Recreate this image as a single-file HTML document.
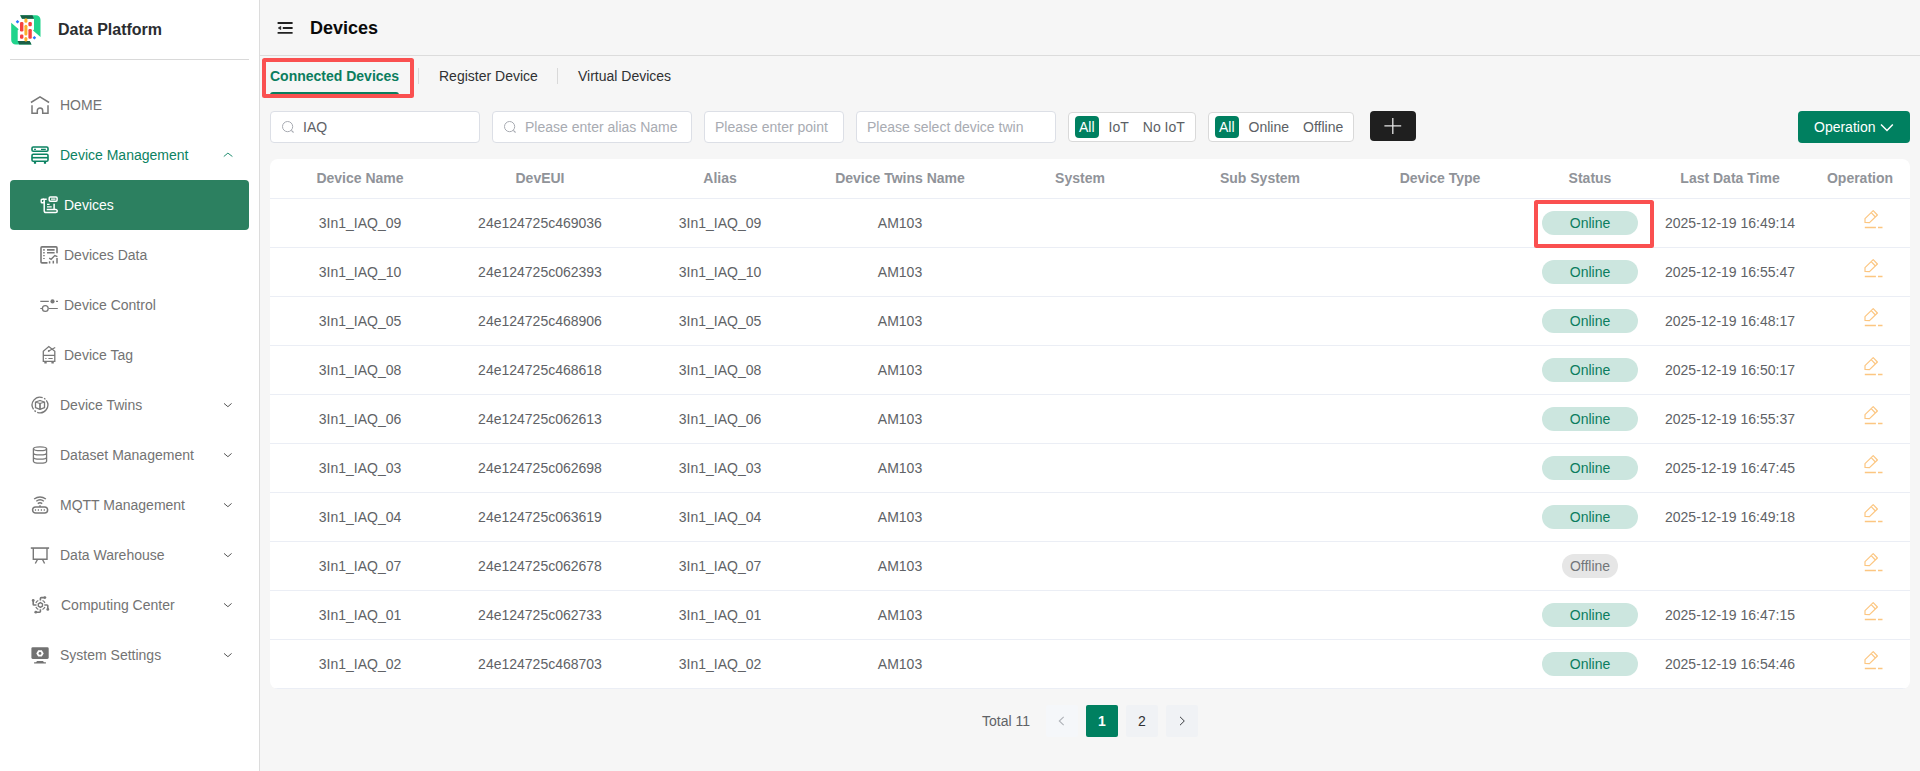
<!DOCTYPE html><html lang="en"><head><meta charset="utf-8"><title>Devices</title><style>*{box-sizing:border-box;margin:0;padding:0}
html,body{width:1920px;height:771px;overflow:hidden;background:#f6f6f6;font-family:"Liberation Sans",Arial,sans-serif;font-size:14px;color:#606266}
i{font-style:normal;display:block}
svg{display:block}
.side{position:absolute;left:0;top:0;width:260px;height:771px;background:#fff;border-right:1px solid #dcdcdc}
.logo{position:absolute;left:0;top:0;width:259px;height:59px}
.logo svg{position:absolute;left:6px;top:10px}
.brand{position:absolute;left:58px;top:20px;font-size:16px;line-height:20px;font-weight:700;color:#2b2d30;white-space:nowrap}
.sdiv{position:absolute;left:10px;top:59px;width:239px;height:1px;background:#d9d9d9}
.mi{position:absolute;left:10px;width:239px;height:50px;line-height:50px;color:#737373;white-space:nowrap}
.mi svg.ic{position:absolute;left:15px;top:10px}
.mi .mt{position:absolute;left:50px;top:0}
.mi.sub svg.ic,.mi.sub-active svg.ic{left:25px}
.mi.sub .mt,.mi.sub-active .mt{left:54px}
.mi.top-open{color:#0b8262}
.mi.sub-active{background:#2c8060;color:#fff;border-radius:4px}
.mi svg.arr{position:absolute;left:212px;top:20px}
.main{position:absolute;left:260px;top:0;width:1660px;height:771px}
.hd{position:absolute;left:0;top:0;width:1660px;height:56px;border-bottom:1px solid #dcdcdc}
.hd svg{position:absolute;left:10px;top:13px}
.hd h1{position:absolute;left:50px;top:16px;font-size:18px;line-height:24px;font-weight:700;color:#0a0a0a}
.tabs{position:absolute;left:-260px;top:0;width:1920px;height:0}
.tab{position:absolute;top:66px;line-height:20px;color:#303133;white-space:nowrap}
.tab.act{left:270px;font-weight:700;color:#0b7d5e}
.tab .bar{position:absolute;left:0;right:0;top:26px;height:3px;background:#0b7d5e;border-radius:3px 3px 0 0}
.tdiv{position:absolute;top:68px;width:1px;height:16px;background:#d9d9d9}
.redbox{position:absolute;border:4px solid #fa5050;border-radius:2.5px}
.filters{position:absolute;left:-260px;top:0;width:1920px;height:0}
.inp{position:absolute;top:111px;height:32px;background:#fff;border:1px solid #dcdfe6;border-radius:4px;line-height:30px;white-space:nowrap}
.inp svg{position:absolute;left:11px;top:8px}
.inp .val{position:absolute;left:32px;color:#606266}
.inp .ph{position:absolute;left:32px;color:#a8abb2}
.inp .ph:first-child{left:10px}
.seg{position:absolute;top:112px;height:30px;background:#fff;border:1px solid #d9d9d9;border-radius:4px;display:flex;align-items:center;padding:0 6px;gap:6px}
.sg{height:22px;line-height:22px;padding:0 4px;color:#5c5f65;white-space:nowrap;border-radius:4px}
.sg.on{background:#008060;color:#fff}
.plus{position:absolute;left:1370px;top:111px;width:46px;height:30px;background:#1f1f1f;border-radius:4px}
.plus svg{position:absolute;left:14px;top:6px}
.opbtn{position:absolute;left:1798px;top:111px;width:112px;height:32px;background:#008060;border-radius:4px;color:#fff;line-height:32px}
.opbtn span{position:absolute;left:16px;top:0}
.opbtn svg{position:absolute;left:82px;top:11px}
.tbl{position:absolute;left:10px;top:159px;width:1640px;height:530px;background:#fff;border-radius:8px;overflow:hidden}
.tr{display:flex;height:49px;border-bottom:1px solid #ebeef5}
.tr.th{height:40px;font-weight:700}
.c{flex:none;position:relative;display:flex;align-items:center;justify-content:center;white-space:nowrap;color:#606266}
.th .c{color:#909399;padding-bottom:2px}
.tag{display:inline-block;height:24px;line-height:24px;border-radius:12px;text-align:center}
.tag.on{width:96px;background:#cce6df;color:#0b7d5e}
.tag.off{width:56px;background:#e6e6e6;color:#73767a}
.c svg.ed{position:absolute;left:45px;top:6px}
.pg{position:absolute;left:-260px;top:0;width:1920px;height:0}
.tot{position:absolute;left:982px;top:711px;line-height:20px;color:#606266}
.pb{position:absolute;top:705px;width:32px;height:32px;line-height:32px;text-align:center;background:#f0f2f5;border-radius:2px;color:#303133}
.pb.cur{background:#008060;color:#fff;font-weight:700}
.pb.dis{background:#f5f7fa;color:#a8abb2}
.pb svg{position:absolute;left:10px;top:10px}
</style></head><body>
<aside class="side">
<div class="logo"><svg class="lg" width="40" height="40" viewBox="0 0 40 40" fill="none" >
<g id="lgh"><path d="M14.200 5.200H30a4.500 4.500 0 0 1 4.500 4.500V27L27 20.500l1-1V8.800H16z" fill="#20d48c"/>
<path d="M14.200 5.300h12.300L28 8.800H16z" fill="#1a5e46"/></g>
<g transform="rotate(180 19.850 19.850)"><path d="M14.200 5.200H30a4.500 4.500 0 0 1 4.500 4.500V27L27 20.500l1-1V8.800H16z" fill="#20d48c"/>
<path d="M14.200 5.300h12.300L28 8.800H16z" fill="#1a5e46"/></g>
<rect x="14" y="11.900" width="3.400" height="9.600" rx="1.250" fill="#f5423f"/><rect x="14" y="24.400" width="3.400" height="4.400" rx="1.250" fill="#f5423f"/>
<rect x="22.400" y="11.900" width="3.400" height="4.300" rx="1.250" fill="#f5423f"/><rect x="22.400" y="18.900" width="3.400" height="9.900" rx="1.250" fill="#f5423f"/>
<rect x="18.400" y="8.300" width="3" height="4.500" rx="1.500" fill="#fbb02c"/><rect x="18.400" y="14.800" width="3" height="10.600" rx="1.500" fill="#fbb02c"/><rect x="18.400" y="27" width="3" height="4.600" rx="1.500" fill="#fbb02c"/>
<rect x="10.200" y="10.500" width="2.600" height="2.600" rx=".4" transform="rotate(45 11.500 11.800)" fill="#2878ff"/><rect x="27.100" y="26.400" width="2.600" height="2.600" rx=".4" transform="rotate(45 28.400 27.700)" fill="#2878ff"/>
</svg><span class="brand">Data Platform</span></div><div class="sdiv"></div>
<div class="mi top" style="top:80px"><svg class="ic" width="30" height="30" viewBox="0 0 30 30" fill="none" ><path d="M5.900 12.500 15 6.900l9.100 5.600M7 15.200v8h5.300v-2.500a2.700 2.700 0 0 1 5.400 0v2.500H23v-8" stroke="#787878" stroke-width="1.500"/></svg><span class="mt">HOME</span></div>
<div class="mi top-open" style="top:130px"><svg class="ic" width="30" height="30" viewBox="0 0 30 30" fill="none" ><rect x="7" y="7" width="16" height="4.200" rx="1.300" stroke="#0b8262" stroke-width="1.600"/><rect x="7" y="14.200" width="16" height="7" rx="1.300" stroke="#0b8262" stroke-width="1.600"/><path d="M7 17.700h16" stroke="#0b8262" stroke-width="1.600"/><path d="M9.100 9.400h1.800M16 9.400h4.800" stroke="#0b8262" stroke-width="1.100"/><path d="M10 22v1.700M20 22v1.700" stroke="#0b8262" stroke-width="2.200"/></svg><span class="mt">Device Management</span><svg class="arr" width="12" height="8" viewBox="0 0 12 8" fill="none" ><path d="M1.800 6.500 5.900 3.100 10.400 6.500" stroke="#0b8262" stroke-width=".9"/></svg></div>
<div class="mi sub-active" style="top:180px"><svg class="ic" width="30" height="30" viewBox="0 0 30 30" fill="none" ><rect x="6.200" y="9.300" width="3" height="3.500" rx=".8" stroke="#fff" stroke-width="1.400"/><path d="M8 9.300h3.700M9.200 11v9.800a1.800 1.800 0 0 0 1.800 1.800h9.700a1.500 1.500 0 0 0 0-3.100h-9" stroke="#fff" stroke-width="1.500"/><rect x="14.200" y="6.900" width="7.900" height="4.300" rx="1.100" stroke="#fff" stroke-width="1.500"/><path d="M16 9.100h4.500M12 14.400h2.600M12 16.900h4.700" stroke="#fff" stroke-width="1.300"/><path d="M19.100 13.800V19" stroke="#fff" stroke-width="1.500"/></svg><span class="mt">Devices</span></div>
<div class="mi sub" style="top:230px"><svg class="ic" width="30" height="30" viewBox="0 0 30 30" fill="none" ><path d="M22 13.200V7.900a1 1 0 0 0-1-1H7a1 1 0 0 0-1 1v14A1 1 0 0 0 7 22.900h5.500" stroke="#787878" stroke-width="1.600"/><path d="M8.200 9.900h1.500M12 9.900h7.600M8.200 12.800h1.500M12 12.800h7.600" stroke="#787878" stroke-width="1.600"/><path d="M8.200 15.600h1.500M8.200 18.500h1.500" stroke="#787878" stroke-width="1.100"/><path d="M14.200 18.100l1.900 1.200 3.700-3.700 2.600 1.100" stroke="#787878" stroke-width="1.400"/><path d="M14.600 21.200v2.300M18.300 20.800v2.700M22 18v5.500" stroke="#787878" stroke-width="1.500"/></svg><span class="mt">Devices Data</span></div>
<div class="mi sub" style="top:280px"><svg class="ic" width="30" height="30" viewBox="0 0 30 30" fill="none" ><path d="M5.300 11.400h8.500M21 11.400h2M5.300 18.500H7M13.800 18.500h9" stroke="#787878" stroke-width="1.200"/><circle cx="17.500" cy="11.400" r="2.100" fill="#787878"/><circle cx="10.300" cy="18.500" r="2.900" stroke="#787878" stroke-width="1.300"/></svg><span class="mt">Device Control</span></div>
<div class="mi sub" style="top:330px"><svg class="ic" width="30" height="30" viewBox="0 0 30 30" fill="none" ><path d="M8.300 21.400V11.200l5.500-4.700 6 4.700v10.200zM8.300 15.400h11.500" stroke="#787878" stroke-width="1.300"/><path d="M13.700 11 20.200 7.400" stroke="#787878" stroke-width="1.200"/><circle cx="13.700" cy="11" r=".9" fill="#787878"/><path d="M10.300 18.500h1.200M13.400 18.500h4.300" stroke="#787878" stroke-width="1"/><path d="M10.500 21.600v1.900M17.600 21.600v1.900" stroke="#787878" stroke-width="2.400"/></svg><span class="mt">Device Tag</span></div>
<div class="mi top" style="top:380px"><svg class="ic" width="30" height="30" viewBox="0 0 30 30" fill="none" ><path d="M17.67 7.67A7.8 7.8 0 0 0 8.53 19.36M12.20 22.28A7.8 7.8 0 0 0 21.31 10.42M10.87 21.61A7.8 7.8 0 0 1 9.48 20.52M19.02 8.31A7.8 7.8 0 0 1 20.42 9.39" stroke="#787878" stroke-width="1.300"/><path d="M15 10.500l4.500 1.500v5.700L15 19.300l-4.500-1.600V12zM10.500 12l4.500 1.500 4.500-1.500" stroke="#787878" stroke-width="1.300" stroke-linejoin="round"/><path d="M15 13.500v5.800" stroke="#787878" stroke-width="1.700"/></svg><span class="mt">Device Twins</span><svg class="arr" width="12" height="8" viewBox="0 0 12 8" fill="none" ><path d="M2 3.400 5.900 6.700 9.600 3.400" stroke="#555" stroke-width="1"/></svg></div>
<div class="mi top" style="top:430px"><svg class="ic" width="30" height="30" viewBox="0 0 30 30" fill="none" ><ellipse cx="15" cy="8.800" rx="6.600" ry="1.900" stroke="#787878" stroke-width="1.300"/><path d="M8.400 8.800v12.500c0 1.100 3 1.900 6.600 1.900s6.600-.8 6.600-1.900V8.800M8.400 13c0 1.100 3 1.900 6.600 1.900s6.600-.8 6.600-1.900M8.400 17.300c0 1.100 3 1.900 6.600 1.900s6.600-.8 6.600-1.900" stroke="#787878" stroke-width="1.300"/></svg><span class="mt">Dataset Management</span><svg class="arr" width="12" height="8" viewBox="0 0 12 8" fill="none" ><path d="M2 3.400 5.900 6.700 9.600 3.400" stroke="#555" stroke-width="1"/></svg></div>
<div class="mi top" style="top:480px"><svg class="ic" width="30" height="30" viewBox="0 0 30 30" fill="none" ><rect x="7.600" y="16.900" width="15" height="6.100" rx="3.050" stroke="#787878" stroke-width="1.500"/><path d="M10.500 19.200v1.500M13.400 19.200v1.500M16.400 19.200v1.500M19.300 19.200v1.500" stroke="#787878" stroke-width="1.200"/><path d="M15 15.200v1.700" stroke="#787878" stroke-width="1.500"/><path d="M9.100 9q5.900-4 11.800 0M11.300 11.300q3.700-3 7.600 0M12.800 13.600q2.200-1.900 4.400 0" stroke="#787878" stroke-width="1.400"/></svg><span class="mt">MQTT Management</span><svg class="arr" width="12" height="8" viewBox="0 0 12 8" fill="none" ><path d="M2 3.400 5.900 6.700 9.600 3.400" stroke="#555" stroke-width="1"/></svg></div>
<div class="mi top" style="top:530px"><svg class="ic" width="30" height="30" viewBox="0 0 30 30" fill="none" ><path d="M5.800 8.050h18.300" stroke="#787878" stroke-width="1.600"/><path d="M8.300 8.050v11.250h13.700V8.050M12.500 19.500l-2.200 4M17.500 19.500l2.100 4" stroke="#787878" stroke-width="1.400"/></svg><span class="mt">Data Warehouse</span><svg class="arr" width="12" height="8" viewBox="0 0 12 8" fill="none" ><path d="M2 3.400 5.900 6.700 9.600 3.400" stroke="#555" stroke-width="1"/></svg></div>
<div class="mi top" style="top:580px"><svg class="ic" width="30" height="30" viewBox="0 0 30 30" fill="none" ><path d="M17.48 16.20L15.40 17.40L13.32 16.20L13.32 13.80L15.40 12.60L17.48 13.80z" stroke="#787878" stroke-width="1.400"/><path d="M17.51 10.47A5 5 0 0 1 19.93 12.89M19.93 17.11A5 5 0 0 1 17.51 19.53M13.29 19.53A5 5 0 0 1 10.87 17.11M10.87 12.89A5 5 0 0 1 13.29 10.47" stroke="#787878" stroke-width="1.250"/><path d="M15.400 10.500V8.400a.8.800 0 0 1 .8-.8h3.600M19.300 15h2.700a.8.800 0 0 1 .8.800v3.500M15.400 19.300v2.100a.8.800 0 0 1-.8.800h-3.700M11.500 15H9a.8.800 0 0 1-.8-.8v-3.700" stroke="#787878" stroke-width="1.600"/><circle cx="19.900" cy="7.600" r="1.400" fill="#787878"/><circle cx="22.800" cy="19.400" r="1.400" fill="#787878"/><circle cx="10.800" cy="22.200" r="1.400" fill="#787878"/><circle cx="8.200" cy="10.400" r="1.400" fill="#787878"/></svg><span class="mt" style="left:51px">Computing Center</span><svg class="arr" width="12" height="8" viewBox="0 0 12 8" fill="none" ><path d="M2 3.400 5.900 6.700 9.600 3.400" stroke="#555" stroke-width="1"/></svg></div>
<div class="mi top" style="top:630px"><svg class="ic" width="30" height="30" viewBox="0 0 30 30" fill="none" ><rect x="6.400" y="7.200" width="17.300" height="11.700" rx="1.300" fill="#727272"/><path d="M18.70 13.40L16.85 16.60L13.15 16.60L11.30 13.40L13.15 10.20L16.85 10.20z" fill="#fff"/><circle cx="15" cy="13.400" r="1.400" fill="#727272"/><path d="M12 21h6l.9 1.200h2v1.300H9.100v-1.300h2z" fill="#727272"/></svg><span class="mt">System Settings</span><svg class="arr" width="12" height="8" viewBox="0 0 12 8" fill="none" ><path d="M2 3.400 5.900 6.700 9.600 3.400" stroke="#555" stroke-width="1"/></svg></div>
</aside>
<main class="main">
<header class="hd"><svg class="fold" width="30" height="30" viewBox="0 0 30 30" fill="none" ><path d="M7.600 10h15M12.800 15h9.800M7.600 19.900h15" stroke="#222" stroke-width="1.800"/><path d="M10.900 13.200v3.500L8 15z" fill="#222" stroke="#222" stroke-width=".4" stroke-linejoin="round"/></svg><h1>Devices</h1></header>
<nav class="tabs"><span class="tab act">Connected Devices<i class="bar"></i></span><i class="tdiv" style="left:418px"></i><span class="tab" style="left:439px">Register Device</span><i class="tdiv" style="left:557px"></i><span class="tab" style="left:578px">Virtual Devices</span><i class="redbox" style="left:262px;top:58px;width:152px;height:40px"></i></nav>
<section class="filters">
<div class="inp" style="left:270px;width:210px"><svg class="se" width="14" height="14" viewBox="0 0 14 14" fill="none" ><circle cx="5.600" cy="6.600" r="5.100" stroke="#a8abb2" stroke-width="1"/><path d="M9.300 10.300 11.600 12.500" stroke="#a8abb2" stroke-width="1.050"/></svg><span class="val">IAQ</span></div>
<div class="inp" style="left:492px;width:200px"><svg class="se" width="14" height="14" viewBox="0 0 14 14" fill="none" ><circle cx="5.600" cy="6.600" r="5.100" stroke="#a8abb2" stroke-width="1"/><path d="M9.300 10.300 11.600 12.500" stroke="#a8abb2" stroke-width="1.050"/></svg><span class="ph">Please enter alias Name</span></div>
<div class="inp" style="left:704px;width:140px"><span class="ph">Please enter point</span></div>
<div class="inp" style="left:856px;width:200px"><span class="ph">Please select device twin</span></div>
<div class="seg" style="left:1068px"><span class="sg on">All</span><span class="sg">IoT</span><span class="sg">No IoT</span></div>
<div class="seg" style="left:1208px"><span class="sg on">All</span><span class="sg">Online</span><span class="sg">Offline</span></div>
<div class="plus"><svg class="pl" width="18" height="18" viewBox="0 0 18 18" fill="none" ><path d="M8.800 1v16M.4 8.800h16.800" stroke="#e6e6e6" stroke-width="1.300"/></svg></div>
<div class="opbtn"><span>Operation</span><svg class="oa" width="14" height="10" viewBox="0 0 14 10" fill="none" ><path d="M1 2.500 7 8.500 12.800 2.500" stroke="#fff" stroke-width="1.500"/></svg></div>
</section>
<section class="tbl"><div class="tr th">
<div class="c" style="width:180px">Device Name</div>
<div class="c" style="width:180px">DevEUI</div>
<div class="c" style="width:180px">Alias</div>
<div class="c" style="width:180px">Device Twins Name</div>
<div class="c" style="width:180px">System</div>
<div class="c" style="width:180px">Sub System</div>
<div class="c" style="width:180px">Device Type</div>
<div class="c" style="width:120px">Status</div>
<div class="c" style="width:160px">Last Data Time</div>
<div class="c" style="width:100px">Operation</div>
</div>
<div class="tr">
<div class="c" style="width:180px">3In1_IAQ_09</div>
<div class="c" style="width:180px">24e124725c469036</div>
<div class="c" style="width:180px">3In1_IAQ_09</div>
<div class="c" style="width:180px">AM103</div>
<div class="c" style="width:180px"></div>
<div class="c" style="width:180px"></div>
<div class="c" style="width:180px"></div>
<div class="c" style="width:120px"><span class="tag on">Online</span></div>
<div class="c" style="width:160px">2025-12-19 16:49:14</div>
<div class="c" style="width:100px"><svg class="ed" width="30" height="30" viewBox="0 0 30 30" fill="none" ><path d="M10 17.500v-3.900L18.200 5.600l4.200 4.400-7.900 7.600zM16.200 7.600l4.200 4.400" stroke="#fcc681" stroke-width="1.200" stroke-linejoin="round"/><path d="M9.800 22.500h11.100M23 22.500h4.500" stroke="#fcc681" stroke-width="1.400"/></svg></div>
</div>
<div class="tr">
<div class="c" style="width:180px">3In1_IAQ_10</div>
<div class="c" style="width:180px">24e124725c062393</div>
<div class="c" style="width:180px">3In1_IAQ_10</div>
<div class="c" style="width:180px">AM103</div>
<div class="c" style="width:180px"></div>
<div class="c" style="width:180px"></div>
<div class="c" style="width:180px"></div>
<div class="c" style="width:120px"><span class="tag on">Online</span></div>
<div class="c" style="width:160px">2025-12-19 16:55:47</div>
<div class="c" style="width:100px"><svg class="ed" width="30" height="30" viewBox="0 0 30 30" fill="none" ><path d="M10 17.500v-3.900L18.200 5.600l4.200 4.400-7.900 7.600zM16.200 7.600l4.200 4.400" stroke="#fcc681" stroke-width="1.200" stroke-linejoin="round"/><path d="M9.800 22.500h11.100M23 22.500h4.500" stroke="#fcc681" stroke-width="1.400"/></svg></div>
</div>
<div class="tr">
<div class="c" style="width:180px">3In1_IAQ_05</div>
<div class="c" style="width:180px">24e124725c468906</div>
<div class="c" style="width:180px">3In1_IAQ_05</div>
<div class="c" style="width:180px">AM103</div>
<div class="c" style="width:180px"></div>
<div class="c" style="width:180px"></div>
<div class="c" style="width:180px"></div>
<div class="c" style="width:120px"><span class="tag on">Online</span></div>
<div class="c" style="width:160px">2025-12-19 16:48:17</div>
<div class="c" style="width:100px"><svg class="ed" width="30" height="30" viewBox="0 0 30 30" fill="none" ><path d="M10 17.500v-3.900L18.200 5.600l4.200 4.400-7.900 7.600zM16.200 7.600l4.200 4.400" stroke="#fcc681" stroke-width="1.200" stroke-linejoin="round"/><path d="M9.800 22.500h11.100M23 22.500h4.500" stroke="#fcc681" stroke-width="1.400"/></svg></div>
</div>
<div class="tr">
<div class="c" style="width:180px">3In1_IAQ_08</div>
<div class="c" style="width:180px">24e124725c468618</div>
<div class="c" style="width:180px">3In1_IAQ_08</div>
<div class="c" style="width:180px">AM103</div>
<div class="c" style="width:180px"></div>
<div class="c" style="width:180px"></div>
<div class="c" style="width:180px"></div>
<div class="c" style="width:120px"><span class="tag on">Online</span></div>
<div class="c" style="width:160px">2025-12-19 16:50:17</div>
<div class="c" style="width:100px"><svg class="ed" width="30" height="30" viewBox="0 0 30 30" fill="none" ><path d="M10 17.500v-3.900L18.200 5.600l4.200 4.400-7.900 7.600zM16.200 7.600l4.200 4.400" stroke="#fcc681" stroke-width="1.200" stroke-linejoin="round"/><path d="M9.800 22.500h11.100M23 22.500h4.500" stroke="#fcc681" stroke-width="1.400"/></svg></div>
</div>
<div class="tr">
<div class="c" style="width:180px">3In1_IAQ_06</div>
<div class="c" style="width:180px">24e124725c062613</div>
<div class="c" style="width:180px">3In1_IAQ_06</div>
<div class="c" style="width:180px">AM103</div>
<div class="c" style="width:180px"></div>
<div class="c" style="width:180px"></div>
<div class="c" style="width:180px"></div>
<div class="c" style="width:120px"><span class="tag on">Online</span></div>
<div class="c" style="width:160px">2025-12-19 16:55:37</div>
<div class="c" style="width:100px"><svg class="ed" width="30" height="30" viewBox="0 0 30 30" fill="none" ><path d="M10 17.500v-3.900L18.200 5.600l4.200 4.400-7.900 7.600zM16.200 7.600l4.200 4.400" stroke="#fcc681" stroke-width="1.200" stroke-linejoin="round"/><path d="M9.800 22.500h11.100M23 22.500h4.500" stroke="#fcc681" stroke-width="1.400"/></svg></div>
</div>
<div class="tr">
<div class="c" style="width:180px">3In1_IAQ_03</div>
<div class="c" style="width:180px">24e124725c062698</div>
<div class="c" style="width:180px">3In1_IAQ_03</div>
<div class="c" style="width:180px">AM103</div>
<div class="c" style="width:180px"></div>
<div class="c" style="width:180px"></div>
<div class="c" style="width:180px"></div>
<div class="c" style="width:120px"><span class="tag on">Online</span></div>
<div class="c" style="width:160px">2025-12-19 16:47:45</div>
<div class="c" style="width:100px"><svg class="ed" width="30" height="30" viewBox="0 0 30 30" fill="none" ><path d="M10 17.500v-3.900L18.200 5.600l4.200 4.400-7.900 7.600zM16.200 7.600l4.200 4.400" stroke="#fcc681" stroke-width="1.200" stroke-linejoin="round"/><path d="M9.800 22.500h11.100M23 22.500h4.500" stroke="#fcc681" stroke-width="1.400"/></svg></div>
</div>
<div class="tr">
<div class="c" style="width:180px">3In1_IAQ_04</div>
<div class="c" style="width:180px">24e124725c063619</div>
<div class="c" style="width:180px">3In1_IAQ_04</div>
<div class="c" style="width:180px">AM103</div>
<div class="c" style="width:180px"></div>
<div class="c" style="width:180px"></div>
<div class="c" style="width:180px"></div>
<div class="c" style="width:120px"><span class="tag on">Online</span></div>
<div class="c" style="width:160px">2025-12-19 16:49:18</div>
<div class="c" style="width:100px"><svg class="ed" width="30" height="30" viewBox="0 0 30 30" fill="none" ><path d="M10 17.500v-3.900L18.200 5.600l4.200 4.400-7.900 7.600zM16.200 7.600l4.200 4.400" stroke="#fcc681" stroke-width="1.200" stroke-linejoin="round"/><path d="M9.800 22.500h11.100M23 22.500h4.500" stroke="#fcc681" stroke-width="1.400"/></svg></div>
</div>
<div class="tr">
<div class="c" style="width:180px">3In1_IAQ_07</div>
<div class="c" style="width:180px">24e124725c062678</div>
<div class="c" style="width:180px">3In1_IAQ_07</div>
<div class="c" style="width:180px">AM103</div>
<div class="c" style="width:180px"></div>
<div class="c" style="width:180px"></div>
<div class="c" style="width:180px"></div>
<div class="c" style="width:120px"><span class="tag off">Offline</span></div>
<div class="c" style="width:160px"></div>
<div class="c" style="width:100px"><svg class="ed" width="30" height="30" viewBox="0 0 30 30" fill="none" ><path d="M10 17.500v-3.900L18.200 5.600l4.200 4.400-7.900 7.600zM16.200 7.600l4.200 4.400" stroke="#fcc681" stroke-width="1.200" stroke-linejoin="round"/><path d="M9.800 22.500h11.100M23 22.500h4.500" stroke="#fcc681" stroke-width="1.400"/></svg></div>
</div>
<div class="tr">
<div class="c" style="width:180px">3In1_IAQ_01</div>
<div class="c" style="width:180px">24e124725c062733</div>
<div class="c" style="width:180px">3In1_IAQ_01</div>
<div class="c" style="width:180px">AM103</div>
<div class="c" style="width:180px"></div>
<div class="c" style="width:180px"></div>
<div class="c" style="width:180px"></div>
<div class="c" style="width:120px"><span class="tag on">Online</span></div>
<div class="c" style="width:160px">2025-12-19 16:47:15</div>
<div class="c" style="width:100px"><svg class="ed" width="30" height="30" viewBox="0 0 30 30" fill="none" ><path d="M10 17.500v-3.900L18.200 5.600l4.200 4.400-7.900 7.600zM16.200 7.600l4.200 4.400" stroke="#fcc681" stroke-width="1.200" stroke-linejoin="round"/><path d="M9.800 22.500h11.100M23 22.500h4.500" stroke="#fcc681" stroke-width="1.400"/></svg></div>
</div>
<div class="tr">
<div class="c" style="width:180px">3In1_IAQ_02</div>
<div class="c" style="width:180px">24e124725c468703</div>
<div class="c" style="width:180px">3In1_IAQ_02</div>
<div class="c" style="width:180px">AM103</div>
<div class="c" style="width:180px"></div>
<div class="c" style="width:180px"></div>
<div class="c" style="width:180px"></div>
<div class="c" style="width:120px"><span class="tag on">Online</span></div>
<div class="c" style="width:160px">2025-12-19 16:54:46</div>
<div class="c" style="width:100px"><svg class="ed" width="30" height="30" viewBox="0 0 30 30" fill="none" ><path d="M10 17.500v-3.900L18.200 5.600l4.200 4.400-7.900 7.600zM16.200 7.600l4.200 4.400" stroke="#fcc681" stroke-width="1.200" stroke-linejoin="round"/><path d="M9.800 22.500h11.100M23 22.500h4.500" stroke="#fcc681" stroke-width="1.400"/></svg></div>
</div>
<i class="redbox" style="left:1264px;top:41px;width:120px;height:48px"></i>
</section>
<footer class="pg"><span class="tot">Total 11</span><span class="pb dis" style="left:1046px"><svg class="pv" width="12" height="12" viewBox="0 0 12 12" fill="none" ><path d="M7.700 1.800 3.300 6l4.400 4.200" stroke="#b0b3b9" stroke-width="1.100"/></svg></span><span class="pb cur" style="left:1086px">1</span><span class="pb" style="left:1126px">2</span><span class="pb" style="left:1166px"><svg class="nx" width="12" height="12" viewBox="0 0 12 12" fill="none" ><path d="M4 1.800 8.300 6 4 10.200" stroke="#3a3c40" stroke-width="1"/></svg></span></footer>
</main></body></html>
